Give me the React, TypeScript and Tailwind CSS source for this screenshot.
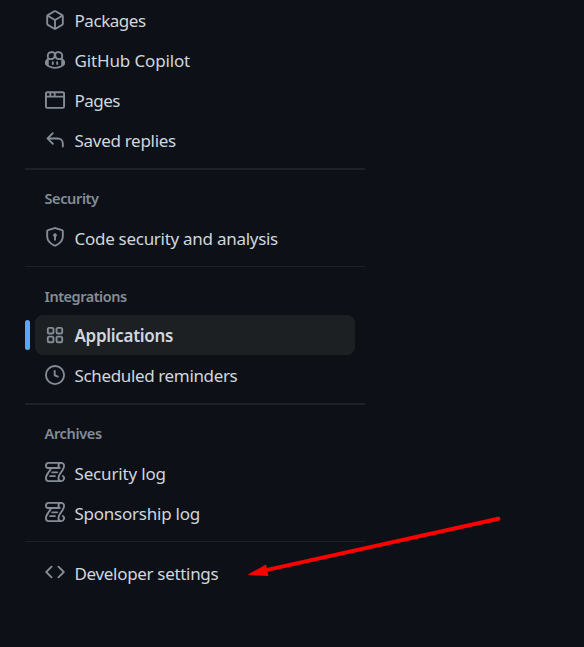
import React from "react";

const paths = {
  package:
    "m8.878.392 5.25 3.045c.54.314.872.89.872 1.514v6.098a1.75 1.75 0 0 1-.872 1.514l-5.25 3.045a1.75 1.75 0 0 1-1.756 0l-5.25-3.045A1.75 1.75 0 0 1 1 11.049V4.951c0-.624.332-1.201.872-1.514L7.122.392a1.75 1.75 0 0 1 1.756 0ZM7.875 1.69l-4.63 2.685L8 7.133l4.755-2.758-4.63-2.685a.248.248 0 0 0-.25 0ZM2.5 5.677v5.372c0 .09.047.171.125.216l4.625 2.683V8.432Zm6.25 8.271 4.625-2.683a.25.25 0 0 0 .125-.216V5.677L8.75 8.432Z",
  copilot:
    "M7.998 15.035c-4.562 0-7.873-2.914-7.998-3.749V9.338c.085-.628.677-1.686 1.588-2.065.013-.07.024-.143.036-.218.029-.183.06-.384.126-.612-.201-.508-.254-1.084-.254-1.656 0-.87.128-1.769.693-2.484.579-.733 1.494-1.124 2.724-1.261 1.206-.134 2.262.034 2.944.765.05.053.096.108.139.165.044-.057.094-.112.143-.165.682-.731 1.738-.899 2.944-.765 1.23.137 2.145.528 2.724 1.261.566.715.693 1.614.693 2.484 0 .572-.053 1.148-.254 1.656.066.228.098.429.126.612.012.076.024.148.037.218.924.385 1.522 1.471 1.591 2.095v1.872c0 .766-3.351 3.795-8.002 3.795Zm0-1.485c2.28 0 4.584-1.11 5.002-1.433V7.862l-.023-.116c-.49.21-1.075.291-1.727.291-1.146 0-2.059-.327-2.71-.991A3.222 3.222 0 0 1 8 6.303a3.24 3.24 0 0 1-.544.743c-.65.664-1.563.991-2.71.991-.652 0-1.236-.081-1.727-.291l-.023.116v4.255c.419.323 2.722 1.433 5.002 1.433ZM6.762 2.83c-.193-.206-.637-.413-1.682-.297-1.019.113-1.479.404-1.713.7-.247.312-.369.789-.369 1.554 0 .793.129 1.171.308 1.371.162.181.519.379 1.442.379.853 0 1.339-.235 1.638-.54.315-.322.527-.827.617-1.553.117-.935-.037-1.395-.241-1.614Zm4.155-.297c-1.044-.116-1.488.091-1.681.297-.204.219-.359.679-.242 1.614.091.726.303 1.231.618 1.553.299.305.784.54 1.638.54.922 0 1.28-.198 1.442-.379.179-.2.308-.578.308-1.371 0-.765-.123-1.242-.37-1.554-.233-.296-.693-.587-1.713-.7ZM6.25 9.037a.75.75 0 0 1 .75.75v1.501a.75.75 0 0 1-1.5 0V9.787a.75.75 0 0 1 .75-.75Zm4.25.75v1.501a.75.75 0 0 1-1.5 0V9.787a.75.75 0 0 1 1.5 0Z",
  browser:
    "M0 2.75C0 1.784.784 1 1.75 1h12.5c.966 0 1.75.784 1.75 1.75v10.5A1.75 1.75 0 0 1 14.25 15H1.75A1.75 1.75 0 0 1 0 13.25ZM14.5 6h-13v7.25c0 .138.112.25.25.25h12.5a.25.25 0 0 0 .25-.25Zm-6-3.5v2h6V2.75a.25.25 0 0 0-.25-.25ZM5 2.5v2h2v-2Zm-3.25 0a.25.25 0 0 0-.25.25V4.5h2v-2Z",
  reply:
    "M6.78 1.97a.75.75 0 0 1 0 1.06L3.81 6h6.44A4.75 4.75 0 0 1 15 10.75v2.5a.75.75 0 0 1-1.5 0v-2.5a3.25 3.25 0 0 0-3.25-3.25H3.81l2.97 2.97a.749.749 0 0 1-.326 1.275.749.749 0 0 1-.734-.215L1.47 7.28a.75.75 0 0 1 0-1.06l4.25-4.25a.75.75 0 0 1 1.06 0Z",
  shield:
    "m8.533.133 5.25 1.68A1.75 1.75 0 0 1 15 3.48V7c0 1.566-.32 3.182-1.303 4.682-.983 1.498-2.585 2.813-5.032 3.855a1.697 1.697 0 0 1-1.33 0c-2.447-1.042-4.049-2.357-5.032-3.855C1.32 10.182 1 8.566 1 7V3.48a1.75 1.75 0 0 1 1.217-1.667l5.25-1.68a1.748 1.748 0 0 1 1.066 0Zm-.61 1.429.001.001-5.25 1.68a.251.251 0 0 0-.174.237V7c0 1.36.275 2.666 1.057 3.859.784 1.194 2.121 2.342 4.366 3.298a.196.196 0 0 0 .154 0c2.245-.957 3.582-2.103 4.366-3.297C13.225 9.666 13.5 8.358 13.5 7V3.48a.25.25 0 0 0-.174-.238l-5.25-1.68a.25.25 0 0 0-.153 0ZM9.5 6.5c0 .536-.286 1.032-.75 1.3v2.45a.75.75 0 0 1-1.5 0V7.8A1.5 1.5 0 1 1 9.5 6.5Z",
  apps:
    "M3.25 1.5h2.5c.966 0 1.75.784 1.75 1.75v2.5A1.75 1.75 0 0 1 5.75 7.5h-2.5A1.75 1.75 0 0 1 1.5 5.75v-2.5c0-.966.784-1.75 1.75-1.75ZM3 3v3h3V3ZM10.25 1.5h2.5c.966 0 1.75.784 1.75 1.75v2.5a1.75 1.75 0 0 1-1.75 1.75h-2.5A1.75 1.75 0 0 1 8.5 5.75v-2.5c0-.966.784-1.75 1.75-1.75ZM10 3v3h3V3ZM3.25 8.5h2.5c.966 0 1.75.784 1.75 1.75v2.5a1.75 1.75 0 0 1-1.75 1.75h-2.5a1.75 1.75 0 0 1-1.75-1.75v-2.5c0-.966.784-1.75 1.75-1.75ZM3 10v3h3v-3ZM10.25 8.5h2.5c.966 0 1.75.784 1.75 1.75v2.5a1.75 1.75 0 0 1-1.75 1.75h-2.5a1.75 1.75 0 0 1-1.75-1.75v-2.5c0-.966.784-1.75 1.75-1.75ZM10 10v3h3v-3Z",
  clock:
    "M8 0a8 8 0 1 1 0 16A8 8 0 0 1 8 0ZM1.5 8a6.5 6.5 0 1 0 13 0 6.5 6.5 0 0 0-13 0Zm7-3.25v2.992l2.028.812a.75.75 0 0 1-.557 1.392l-2.5-1A.751.751 0 0 1 7 8.25v-3.5a.75.75 0 0 1 1.5 0Z",
  log:
    "M5 8.25a.75.75 0 0 1 .75-.75h4a.75.75 0 0 1 0 1.5h-4A.75.75 0 0 1 5 8.25ZM4 10.5A.75.75 0 0 0 4 12h4a.75.75 0 0 0 0-1.5H4ZM13-.005c1.654 0 3 1.328 3 3 0 .982-.338 1.933-.783 2.818-.443.879-1.028 1.758-1.582 2.588l-.011.017c-.568.853-1.104 1.659-1.501 2.446-.398.789-.623 1.494-.623 2.136a1.5 1.5 0 1 0 2.333-1.248.75.75 0 0 1 .834-1.246A3 3 0 0 1 13 16H3a3 3 0 0 1-3-3c0-1.582.891-3.135 1.777-4.506.209-.322.418-.637.623-.946.473-.709.923-1.386 1.287-2.048H2.51c-.576 0-1.381-.133-1.907-.783A2.68 2.68 0 0 1 0 2.995a3 3 0 0 1 3-3Zm0 1.5a1.5 1.5 0 0 0-1.5 1.5c0 .476.223.834.667 1.132A.75.75 0 0 1 11.75 5.5H5.368c-.467 1.003-1.141 2.015-1.773 2.963-.192.289-.381.571-.558.845C2.13 10.711 1.5 11.916 1.5 13A1.5 1.5 0 0 0 3 14.5h7.401A2.989 2.989 0 0 1 10 13c0-.979.338-1.928.784-2.812.441-.874 1.023-1.748 1.575-2.576l.017-.026c.568-.853 1.103-1.658 1.501-2.448.398-.79.623-1.497.623-2.143 0-.838-.669-1.5-1.5-1.5Zm-10 0a1.5 1.5 0 0 0-1.5 1.5c0 .321.1.569.27.778.097.12.325.227.74.227h7.674A2.737 2.737 0 0 1 10 2.995c0-.546.146-1.059.401-1.5Z",
  code:
    "m11.28 3.22 4.25 4.25a.75.75 0 0 1 0 1.06l-4.25 4.25a.749.749 0 0 1-1.275-.326.749.749 0 0 1 .215-.734L13.94 8l-3.72-3.72a.749.749 0 0 1 .326-1.275.749.749 0 0 1 .734.215Zm-6.56 0a.751.751 0 0 1 1.042.018.751.751 0 0 1 .018 1.042L2.06 8l3.72 3.72a.749.749 0 0 1-.326 1.275.749.749 0 0 1-.734-.215L.47 8.53a.75.75 0 0 1 0-1.06Z",
};

type ItemProps = {
  icon: keyof typeof paths;
  label: string;
  tracking: string;
  iconClass?: string;
  active?: boolean;
};

function Item({ icon, label, tracking, iconClass = "", active = false }: ItemProps) {
  return (
    <li className="flex h-10 items-center">
      <span className={`h-[30px] w-[5px] shrink-0 rounded-md ${active ? "bg-[#58a6ff]" : ""}`} />
      <a
        className={`ml-[5px] flex h-10 w-80 items-center gap-[9.5px] rounded-lg pl-2.5 ${
          active ? "bg-[#1c2023] font-semibold" : ""
        }`}
      >
        <svg viewBox="0 0 16 16" className={`size-5 shrink-0 fill-[#848d97] ${iconClass}`} fillRule="evenodd">
          <path d={paths[icon]} />
        </svg>
        <span className={`whitespace-nowrap pt-px text-[17px] leading-6 text-[#d0d7de] ${tracking}`}>{label}</span>
      </a>
    </li>
  );
}

function Heading({ children, tracking }: { children: string; tracking: string }) {
  return (
    <h3 className={`flex h-5 items-center pt-0.5 pl-[19.5px] text-[14.5px] font-semibold text-[#848d97] ${tracking}`}>
      {children}
    </h3>
  );
}

export default function App() {
  return (
    <main className="relative h-[647px] w-[584px] overflow-hidden bg-[#0d1117] font-['Noto_Sans','Open_Sans',sans-serif]">
      <nav className="ml-[25px] w-[340px]">
        <ul className="pb-2">
          <Item icon="package" label="Packages" tracking="tracking-[-0.45px]" />
          <Item icon="copilot" label="GitHub Copilot" tracking="tracking-[-0.14px]" />
          <Item icon="browser" label="Pages" tracking="tracking-[-0.55px]" />
          <Item icon="reply" label="Saved replies" tracking="tracking-[-0.29px]" />
        </ul>
        <section className="h-[98px] border-t-2 border-[#1e2228] pt-[18px]">
          <Heading tracking="tracking-[-0.38px]">Security</Heading>
          <ul className="pt-2.5">
            <Item
              icon="shield"
              label="Code security and analysis"
              iconClass="-mt-0.5"
              tracking="tracking-[-0.28px]"
            />
          </ul>
        </section>
        <section className="h-[137px] border-t border-[#1e2228] pt-[19px]">
          <Heading tracking="tracking-[-0.48px]">Integrations</Heading>
          <ul className="pt-[9px]">
            <Item icon="apps" label="Applications" active tracking="tracking-[-0.3px]" />
            <Item icon="clock" label="Scheduled reminders" tracking="tracking-[-0.36px]" />
          </ul>
        </section>
        <section className="h-[138px] border-t-2 border-[#1e2228] pt-[18px]">
          <Heading tracking="tracking-[-0.33px]">Archives</Heading>
          <ul className="pt-2.5">
            <Item icon="log" label="Security log" iconClass="-mt-0.5" tracking="tracking-[-0.17px]" />
            <Item icon="log" label="Sponsorship log" iconClass="-mt-0.5" tracking="tracking-[-0.24px]" />
          </ul>
        </section>
        <ul className="border-t border-[#1e2228] pt-[11px]">
          <Item icon="code" label="Developer settings" iconClass="-mt-0.5" tracking="tracking-[-0.32px]" />
        </ul>
      </nav>
      <svg className="absolute top-[500px] left-[235px] h-[90px] w-[280px]" viewBox="0 0 280 90">
        <path d="M30 70.4 263.5 18.8" stroke="#f00" strokeWidth="4" strokeLinecap="round" />
        <path d="M12.5 74.8 31 64.5 33.5 76Z" fill="#f00" />
      </svg>
    </main>
  );
}
